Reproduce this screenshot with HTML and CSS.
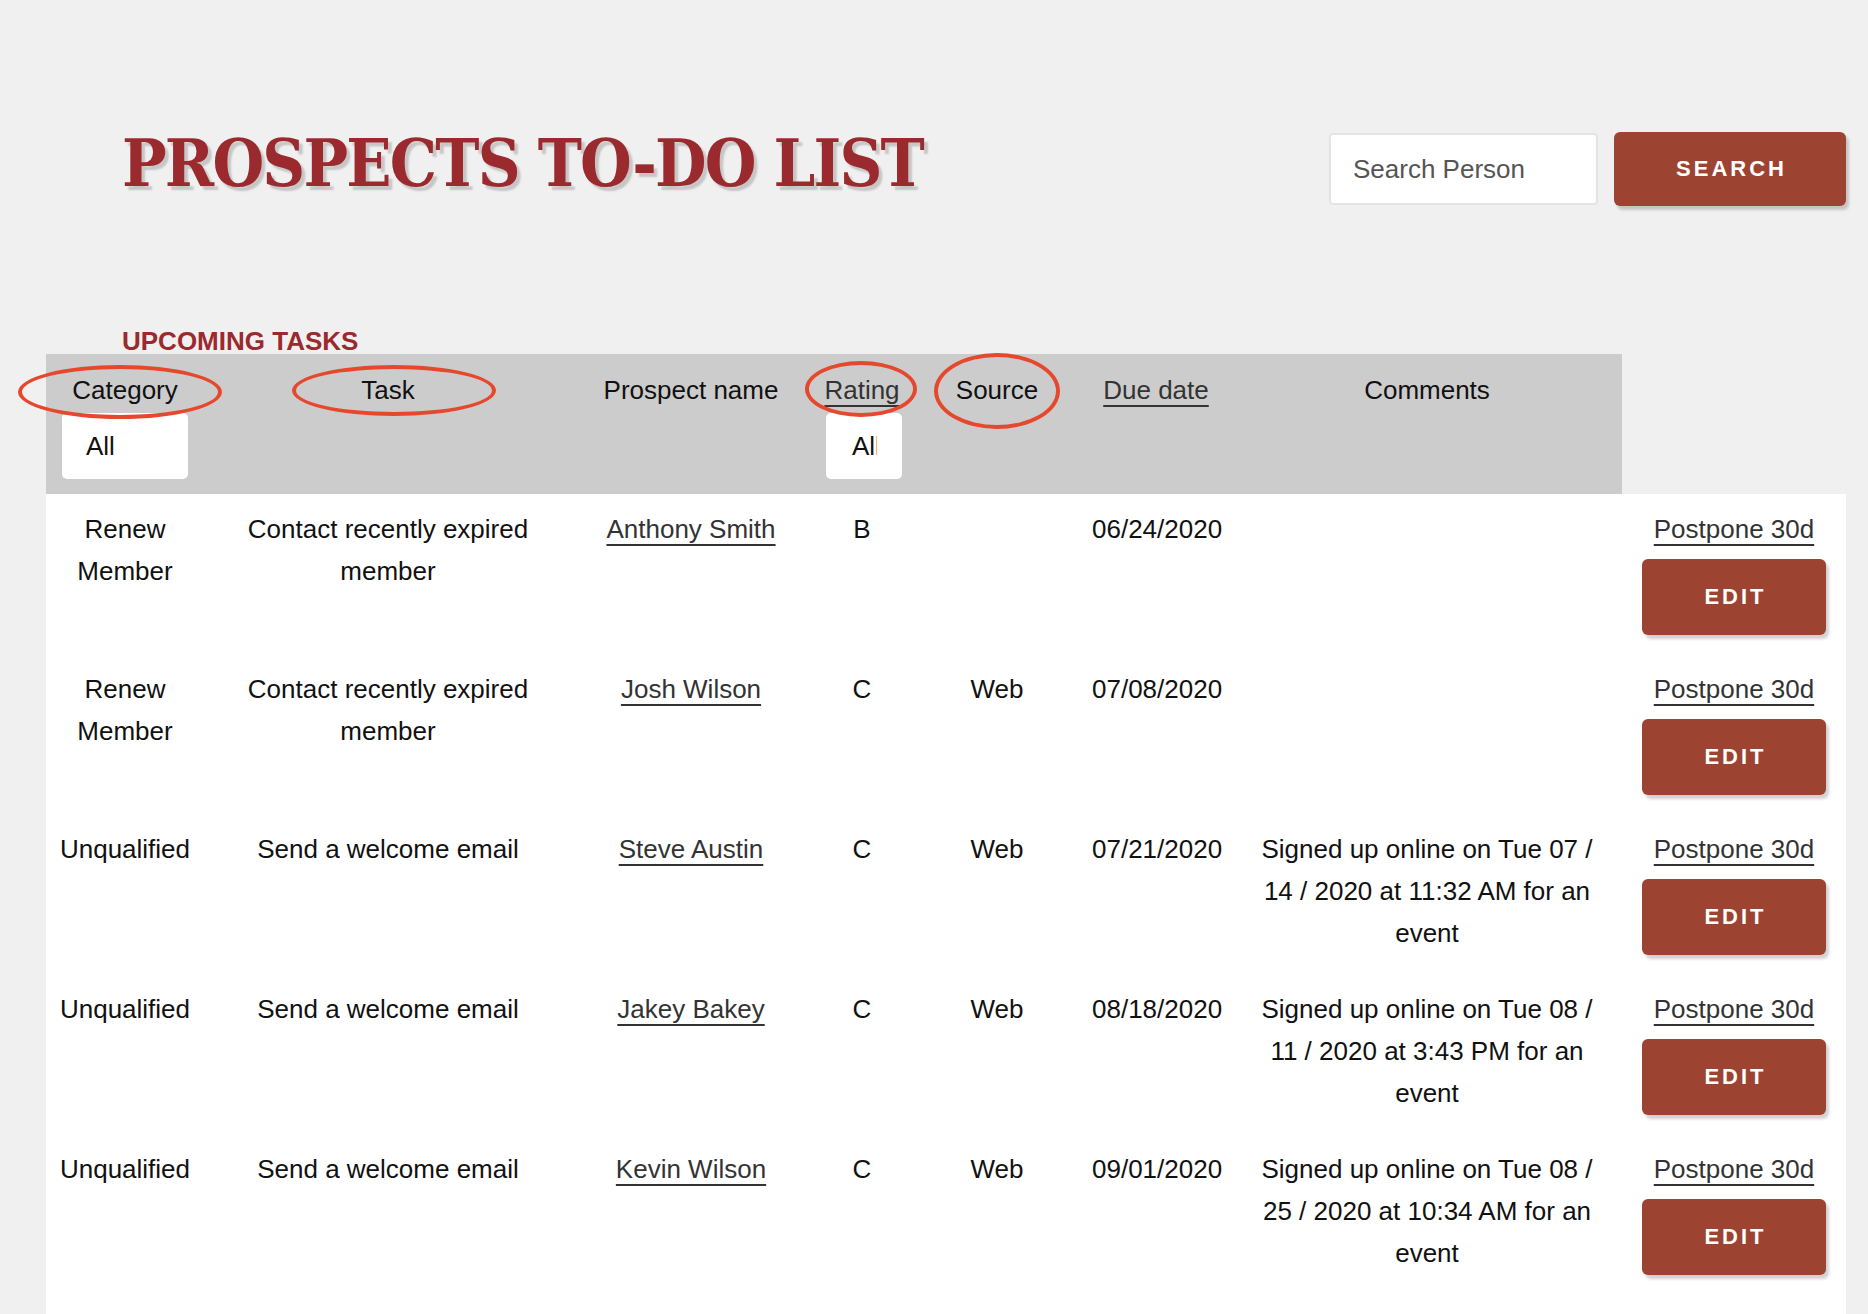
FILE: index.html
```html
<!DOCTYPE html>
<html lang="en">
<head>
  <meta charset="UTF-8">
  <title>Prospects To-Do List</title>
  <link rel="stylesheet" href="styles.css">
</head>
<body>
  <div class="page">

    <div class="top-bar">
      <h1>PROSPECTS TO-DO LIST</h1>
      <form class="search">
        <input type="text" placeholder="Search Person">
        <button type="button" class="btn search-btn">SEARCH</button>
      </form>
    </div>

    <h2>UPCOMING TASKS</h2>

    <table class="tasks">
      <colgroup>
        <col class="c-cat">
        <col class="c-task">
        <col class="c-name">
        <col class="c-rating">
        <col class="c-source">
        <col class="c-due">
        <col class="c-comments">
        <col class="c-actions">
      </colgroup>
      <thead>
        <tr>
          <th>
            Category
            <span class="mark mark-cat"></span>
            <div class="filter filter-cat"><span>All</span></div>
          </th>
          <th>Task<span class="mark mark-task"></span></th>
          <th>Prospect name</th>
          <th>
            <a href="#">Rating</a>
            <span class="mark mark-rating"></span>
            <div class="filter filter-rating"><span>All</span></div>
          </th>
          <th>Source<span class="mark mark-source"></span></th>
          <th><a href="#">Due date</a></th>
          <th>Comments</th>
          <th class="blank"></th>
        </tr>
      </thead>
      <tbody>
        <tr>
          <td>Renew Member</td>
          <td>Contact recently expired member</td>
          <td><a href="#">Anthony Smith</a></td>
          <td>B</td>
          <td></td>
          <td>06/24/2020</td>
          <td class="comments"></td>
          <td><a href="#">Postpone 30d</a><button type="button" class="btn edit-btn">EDIT</button></td>
        </tr>
        <tr>
          <td>Renew Member</td>
          <td>Contact recently expired member</td>
          <td><a href="#">Josh Wilson</a></td>
          <td>C</td>
          <td>Web</td>
          <td>07/08/2020</td>
          <td class="comments"></td>
          <td><a href="#">Postpone 30d</a><button type="button" class="btn edit-btn">EDIT</button></td>
        </tr>
        <tr>
          <td>Unqualified</td>
          <td>Send a welcome email</td>
          <td><a href="#">Steve Austin</a></td>
          <td>C</td>
          <td>Web</td>
          <td>07/21/2020</td>
          <td class="comments">Signed up online on Tue 07 / 14 / 2020 at 11:32 AM for an event</td>
          <td><a href="#">Postpone 30d</a><button type="button" class="btn edit-btn">EDIT</button></td>
        </tr>
        <tr>
          <td>Unqualified</td>
          <td>Send a welcome email</td>
          <td><a href="#">Jakey Bakey</a></td>
          <td>C</td>
          <td>Web</td>
          <td>08/18/2020</td>
          <td class="comments">Signed up online on Tue 08 / 11 / 2020 at 3:43 PM for an event</td>
          <td><a href="#">Postpone 30d</a><button type="button" class="btn edit-btn">EDIT</button></td>
        </tr>
        <tr>
          <td>Unqualified</td>
          <td>Send a welcome email</td>
          <td><a href="#">Kevin Wilson</a></td>
          <td>C</td>
          <td>Web</td>
          <td>09/01/2020</td>
          <td class="comments">Signed up online on Tue 08 / 25 / 2020 at 10:34 AM for an event</td>
          <td><a href="#">Postpone 30d</a><button type="button" class="btn edit-btn">EDIT</button></td>
        </tr>
      </tbody>
    </table>
    <div class="tasks-end"></div>

  </div>
</body>
</html>
```

FILE: styles.css
```css
body {
  margin: 0;
  background: #f0f0f0;
  font-family: "Liberation Sans", Arial, sans-serif;
  font-size: 26px;
  color: #111;
}

.page {
  padding: 0 22px 0 46px;
}

.top-bar {
  display: flex;
  justify-content: space-between;
  align-items: center;
  padding-top: 130px;
}

h1 {
  margin: 0 0 12px 76px;
  font-family: "DejaVu Serif", "Liberation Serif", serif;
  font-weight: bold;
  font-size: 66px;
  line-height: 1;
  letter-spacing: -2px;
  color: #9b2a2e;
  text-shadow: 4px 4px 2px #c6c6c6;
  transform: scaleX(0.9);
  transform-origin: left center;
}

.search {
  display: flex;
  align-items: center;
  gap: 16px;
  margin: 0;
}

.search input {
  width: 269px;
  height: 72px;
  box-sizing: border-box;
  padding: 0 22px;
  border: 2px solid #e4e4e4;
  border-radius: 4px;
  background: #fff;
  font-family: inherit;
  font-size: 26px;
  color: #333;
  outline: none;
}

.search input::placeholder {
  color: #555;
}

.btn {
  display: block;
  border: none;
  border-radius: 6px;
  background: #9d4332;
  color: #fff;
  font-family: "Liberation Sans", Arial, sans-serif;
  font-weight: bold;
  font-size: 22px;
  letter-spacing: 3px;
  padding: 0 0 0 3px;
  box-shadow: 3px 4px 3px rgba(0, 0, 0, 0.18);
  cursor: pointer;
}

.search-btn {
  width: 232px;
  height: 74px;
}

h2 {
  margin: 120px 0 0 76px;
  font-size: 26px;
  line-height: 26px;
  color: #9b2a2e;
}

.tasks {
  width: 1800px;
  border-collapse: collapse;
  table-layout: fixed;
}

.c-cat { width: 158px; }
.c-task { width: 368px; }
.c-name { width: 238px; }
.c-rating { width: 104px; }
.c-source { width: 166px; }
.c-due { width: 152px; }
.c-comments { width: 390px; }
.c-actions { width: 224px; }

.tasks th,
.tasks td {
  text-align: center;
  vertical-align: top;
  line-height: 42px;
  font-size: 26px;
}

.tasks th {
  position: relative;
  padding: 15px 12px;
  background: #ccc;
  font-weight: normal;
}

.tasks th.blank {
  background: transparent;
}

.tasks td {
  padding: 14px 12px 19px;
  background: #fff;
}

.tasks td.comments {
  padding-left: 16px;
  padding-right: 16px;
}

.tasks a {
  color: #333;
  text-decoration: underline;
  text-decoration-thickness: 2px;
  text-underline-offset: 6px;
}

.filter {
  display: block;
  height: 66px;
  margin: 2px auto 0;
  box-sizing: border-box;
  background: #fff;
  border-radius: 5px;
  text-align: left;
  line-height: 66px;
  white-space: nowrap;
  overflow: hidden;
}

.filter-cat {
  width: 126px;
  padding-left: 24px;
}

.filter-rating {
  width: 76px;
  margin-left: 4px;
  padding-left: 26px;
}

.filter-rating span {
  display: inline-block;
  width: 25px;
  overflow: hidden;
  vertical-align: top;
}

.edit-btn {
  width: 184px;
  height: 76px;
  margin: 9px auto 0;
}

.tasks-end {
  width: 1800px;
  height: 40px;
  background: #fff;
}

/* red annotation rings drawn over the header */
.mark {
  position: absolute;
  z-index: 1;
  box-sizing: border-box;
  border: 4px solid #e5482d;
  border-radius: 50%;
  pointer-events: none;
}

.mark-cat { left: -28px; top: 11px; width: 204px; height: 54px; }
.mark-task { left: 88px; top: 11px; width: 204px; height: 51px; }
.mark-rating { left: -5px; top: 7px; width: 112px; height: 56px; }
.mark-source { left: 20px; top: -1px; width: 126px; height: 76px; }
```
